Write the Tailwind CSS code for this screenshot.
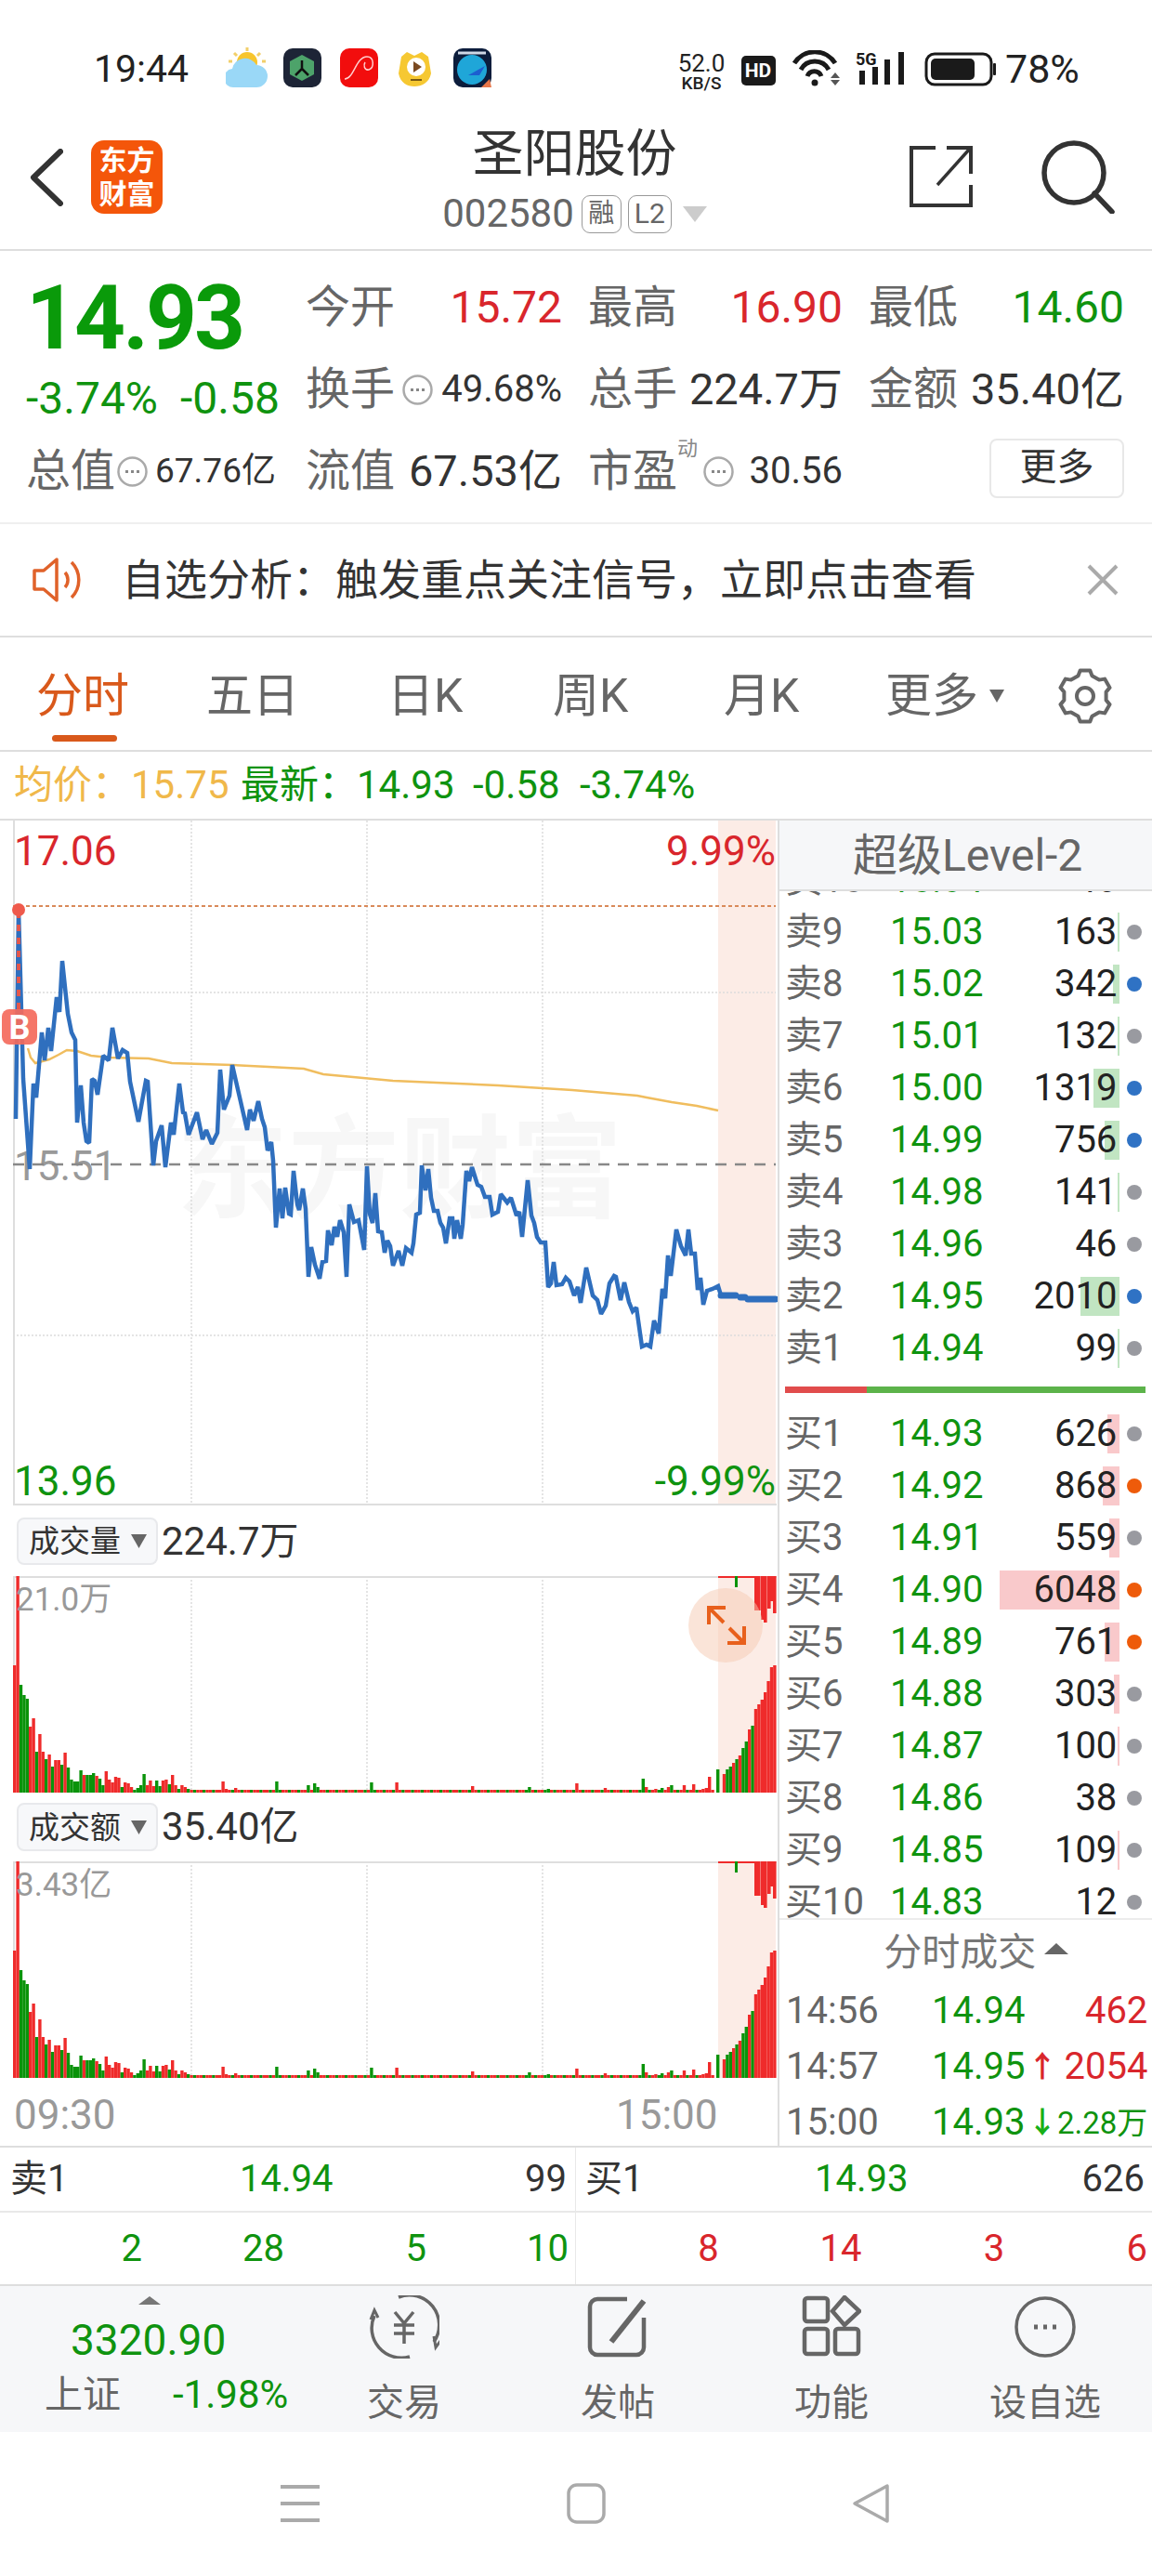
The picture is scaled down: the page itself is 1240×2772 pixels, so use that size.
<!DOCTYPE html>
<html lang="zh-CN">

<head>
    <meta charset="UTF-8">
    <meta name="viewport" content="width=device-width, initial-scale=1.0">
    <title>圣阳股份</title>
    <script src="https://cdn.jsdelivr.net/npm/@tailwindcss/browser@4"></script>
</head>

<body class="bg-white w-[1240px] h-[2772px] overflow-hidden font-['Roboto','Noto_Sans_CJK_SC',sans-serif] text-[#333]">

    <!-- status bar -->
    <div class="h-[110px] pt-[38px] flex items-center relative">
        <span class="ml-[101px] w-[142px] text-[41px] leading-none text-[#222]">19:44</span>
        <svg width="290" height="46" viewBox="243 52 290 46">
            <circle cx="266" cy="68" r="11" fill="#f7c52c" />
            <path d="M266 52v4M252 58l3 3M280 58l-3 3M246 67h4M286 67h-4" stroke="#f2cf6a" stroke-width="3" />
            <path d="M252 95a10 10 0 0 1-2-20 14 14 0 0 1 26-4 12 12 0 0 1 0 24z" fill="#9ad8f7" />
            <rect x="305" y="53" width="41" height="42" rx="10" fill="#1d2436" />
            <path d="M325 60l13 7v14l-13 7-13-7V67z" fill="#4da36a" />
            <path d="M325 66v9m0 0l-7 7m7-7l7 7" stroke="#111" stroke-width="2.5" fill="none" />
            <rect x="366" y="53" width="41" height="42" rx="10" fill="#f20d0d" />
            <path d="M371 86c10 0 12-24 24-24 8 0 8 12 2 14-5 1-6-5-4-8" stroke="#ffd0d0" stroke-width="1.5" fill="none" />
            <path d="M432 62l6-5 8 4 8-4 7 5 3 18c-2 10-10 14-18 14s-15-4-17-14z" fill="#f6c832" />
            <circle cx="448" cy="73" r="10" fill="#fff" />
            <path d="M445 67l9 6-9 6z" fill="#7a4a22" />
            <path d="M442 87h12" stroke="#7a5a12" stroke-width="2" />
            <rect x="488" y="53" width="41" height="42" rx="10" fill="#0c1d3c" />
            <circle cx="508" cy="76" r="16" fill="#1fa6d8" />
            <path d="M493 58h30" stroke="#cfd8e6" stroke-width="3" />
            <path d="M504 82l18-10-6 10z" fill="#1c5fd0" />
            <path d="M518 95l9-9 2 9z" fill="#e8774a" />
        </svg>
        <div class="absolute left-[724px] top-[56px] w-[62px] flex flex-col items-center text-[#222]">
            <span class="text-[26px] leading-[24px]">52.0</span>
            <span class="text-[19px] leading-[19px] font-medium">KB/S</span>
        </div>
        <svg class="absolute left-[798px] top-[54px]" width="368" height="42" viewBox="798 54 368 42">
            <rect x="798" y="60" width="37" height="32" rx="5" fill="#1a1a1a" />
            <text x="816" y="83" text-anchor="middle" font-size="21" font-weight="700" fill="#fff">HD</text>
            <path d="M855 68a26 26 0 0 1 44 0M862 75a17 17 0 0 1 30 0M869 82a8 8 0 0 1 15 0" stroke="#1a1a1a" stroke-width="5" fill="none" />
            <circle cx="877" cy="89" r="3.5" fill="#1a1a1a" />
            <path d="M899 78l5 6h-10zM899 92l5-6h-10z" fill="#555" />
            <text x="921" y="70" font-size="18" font-weight="700" fill="#1a1a1a">5G</text>
            <path d="M928 76v15M942 72v19M955 64v27M970 56v35" stroke="#1a1a1a" stroke-width="6" />
            <rect x="997" y="58" width="70" height="33" rx="9" fill="none" stroke="#1a1a1a" stroke-width="3" />
            <rect x="1002" y="63" width="47" height="23" rx="5" fill="#1a1a1a" />
            <rect x="1069" y="68" width="3" height="13" rx="1" fill="#1a1a1a" />
        </svg>
        <span class="absolute left-[1082px] top-[54px] text-[43px] leading-[40px] text-[#222]">78%</span>
    </div>

    <!-- stock header -->
    <div class="h-[160px] border-b-2 border-[#dedede] grid grid-cols-[1fr_auto_1fr]">
        <div class="pl-[32px] pt-[41px] flex items-start gap-[30px]">
            <svg class="mt-[9px]" width="36" height="62" viewBox="0 0 36 62">
                <path d="M33 3L4 31l29 28" fill="none" stroke="#333" stroke-width="6" stroke-linecap="round" stroke-linejoin="round" />
            </svg>
            <div class="w-[77px] h-[79px] rounded-[14px] bg-[#f4560a] text-white text-[30px] leading-[36px] font-bold flex flex-col items-center justify-center">
                <span>东方</span>
                <span>财富</span>
            </div>
        </div>
        <div class="flex flex-col items-center pt-[24px] -ml-[3px]">
            <span class="text-[55px] leading-[62px] text-[#333]">圣阳股份</span>
            <div class="mt-[13px] flex items-center text-[#666]">
                <span class="text-[42px] leading-[42px]">002580</span>
                <span class="ml-[8px] w-[43px] h-[41px] border border-[#999] rounded-[9px] text-[28px] leading-[38px] text-center">融</span>
                <span class="ml-[7px] w-[47px] h-[41px] border border-[#999] rounded-[9px] text-[30px] leading-[38px] text-center">L2</span>
                <svg class="ml-[12px]" width="26" height="17" viewBox="0 0 26 17"><path d="M0 0h26L13 17z" fill="#ccc" /></svg>
            </div>
        </div>
        <div class="flex justify-end items-start pt-[40px] pr-[40px] gap-[73px]">
            <svg class="mt-[7px]" width="68" height="66" viewBox="0 0 68 66" fill="none" stroke="#333" stroke-width="4">
                <path d="M28 2H2v62h64V42" />
                <path d="M66 30V2H40" />
                <path d="M64 4L30 42" stroke-width="3.5" />
            </svg>
            <svg width="80" height="80" viewBox="0 0 80 80" fill="none" stroke="#333" stroke-width="5.5">
                <circle cx="36" cy="36" r="32" />
                <path d="M58 58l19 20" stroke-linecap="round" />
            </svg>
        </div>
    </div>

    <!-- quote block -->
    <div class="h-[294px] border-b-2 border-[#efefef] pt-[17px] grid grid-cols-[329px_304px_302px_275px] grid-rows-[88px_88px_88px]">
        <div class="row-span-2 pl-[28px] pt-[17px]">
            <div class="text-[96px] leading-[76px] font-bold text-[#0a9a0a] tracking-[-3px]">14.93</div>
            <div class="mt-[24px] flex gap-[24px] text-[48px] leading-[50px] text-[#0f930f]">
                <span>-3.74%</span><span>-0.58</span>
            </div>
        </div>
        <div class="flex justify-between items-center w-[276px] text-[48px]"><span class="text-[#666]">今开</span><span class="text-[#d9262c]">15.72</span></div>
        <div class="flex justify-between items-center w-[274px] text-[48px]"><span class="text-[#666]">最高</span><span class="text-[#d9262c]">16.90</span></div>
        <div class="flex justify-between items-center w-[275px] text-[48px]"><span class="text-[#666]">最低</span><span class="text-[#0f930f]">14.60</span></div>

        <div class="flex items-center w-[276px]">
            <span class="text-[48px] text-[#666]">换手</span>
            <svg class="ml-[8px]" width="33" height="33" viewBox="0 0 33 33"><circle cx="16.500" cy="16.500" r="15" fill="none" stroke="#aaa" stroke-width="2.500" /><path d="M9 16.500h3M15 16.500h3M21 16.500h3" stroke="#888" stroke-width="3" /></svg>
            <span class="ml-auto text-[40px]">49.68%</span>
        </div>
        <div class="flex items-center justify-between w-[274px]"><span class="text-[48px] text-[#666]">总手</span><span class="text-[47px]">224.7万</span></div>
        <div class="flex items-center justify-between w-[275px]"><span class="text-[48px] text-[#666]">金额</span><span class="text-[47px]">35.40亿</span></div>

        <div class="flex items-center pl-[28px]">
            <span class="text-[48px] text-[#666]">总值</span>
            <svg class="ml-[2px]" width="33" height="33" viewBox="0 0 33 33"><circle cx="16.500" cy="16.500" r="15" fill="none" stroke="#aaa" stroke-width="2.500" /><path d="M9 16.500h3M15 16.500h3M21 16.500h3" stroke="#888" stroke-width="3" /></svg>
            <span class="ml-[8px] text-[37px] whitespace-nowrap">67.76亿</span>
        </div>
        <div class="flex items-center justify-between w-[276px]"><span class="text-[48px] text-[#666]">流值</span><span class="text-[47px]">67.53亿</span></div>
        <div class="flex items-center w-[274px] relative">
            <span class="text-[48px] text-[#666]">市盈</span>
            <span class="absolute left-[96px] top-[9px] text-[22px] leading-none text-[#888]">动</span>
            <svg class="ml-[28px]" width="33" height="33" viewBox="0 0 33 33"><circle cx="16.500" cy="16.500" r="15" fill="none" stroke="#aaa" stroke-width="2.500" /><path d="M9 16.500h3M15 16.500h3M21 16.500h3" stroke="#888" stroke-width="3" /></svg>
            <span class="ml-auto text-[40px]">30.56</span>
        </div>
        <div class="flex items-center">
            <span class="ml-[130px] -mt-[6px] w-[145px] h-[64px] border-2 border-[#e8e8e8] rounded-[8px] text-[40px] leading-[58px] text-center">更多</span>
        </div>
    </div>

    <!-- notice -->
    <div class="h-[122px] border-b-2 border-[#dedede] flex items-center pl-[35px] pr-[36px]">
        <svg width="60" height="50" viewBox="0 0 60 50" fill="none" stroke="#e0622a" stroke-width="3.5">
            <path d="M2 15h10L26 3v44L12 35H2z" stroke-linejoin="round" />
            <path d="M35 17a12 12 0 0 1 0 16" />
            <path d="M42 6a27 27 0 0 1 0 38" />
        </svg>
        <span class="ml-[36px] text-[46px] leading-none text-[#333] whitespace-nowrap">自选分析：触发重点关注信号，立即点击查看</span>
        <svg class="ml-auto" width="34" height="34" viewBox="0 0 34 34"><path d="M2 2l30 30M32 2L2 32" stroke="#aaa" stroke-width="4" /></svg>
    </div>

    <!-- period tabs -->
    <div class="h-[123px] border-b-2 border-[#dedede] relative text-[50px] leading-none text-[#666]">
        <span class="absolute left-[39px] top-[38px] text-[#d9591b]">分时</span>
        <span class="absolute left-[56px] top-[105px] w-[70px] h-[7px] rounded-full bg-[#d9591b]"></span>
        <span class="absolute left-[222px] top-[38px]">五日</span>
        <span class="absolute left-[417px] top-[38px]">日K</span>
        <span class="absolute left-[595px] top-[38px]">周K</span>
        <span class="absolute left-[779px] top-[38px]">月K</span>
        <span class="absolute left-[953px] top-[38px]">更多</span>
        <svg class="absolute left-[1065px] top-[56px]" width="16" height="14" viewBox="0 0 16 14"><path d="M0 0h16L8 14z" fill="#666" /></svg>
        <svg class="absolute left-[1137px] top-[32px]" width="62" height="62" viewBox="-31 -31 62 62" fill="none" stroke="#666" stroke-width="4" stroke-linejoin="round">
            <path d="M5.3 27.5L-5.3 27.5-7.5 21.7-15.1 17.4-21.1 18.4-26.5 9.1-22.6 4.4-22.6-4.4-26.5-9.1-21.1-18.4-15.1-17.4-7.5-21.7-5.3-27.5 5.3-27.5 7.5-21.7 15.1-17.4 21.1-18.4 26.5-9.1 22.6-4.4 22.6 4.4 26.5 9.1 21.1 18.4 15.1 17.4 7.5 21.7z" />
            <circle r="9" />
        </svg>
    </div>

    <!-- price line -->
    <div class="h-[72px] flex items-center pl-[15px] text-[42px] leading-none text-[#0f930f] whitespace-nowrap">
        <span class="text-[#f0b84a] w-[126px]">均价：</span>
        <span class="text-[#f0b84a] w-[118px]">15.75</span>
        <span class="w-[125px]">最新：</span>
        <span class="w-[125px]">14.93</span>
        <span class="w-[115px]">-0.58</span>
        <span>-3.74%</span>
    </div>

    <!-- charts and order book -->
    <div class="h-[1430px] border-b-2 border-t-2 border-[#dedede] flex">
        <div class="w-[837px] shrink-0">
            <svg class="block" width="837" height="738" viewBox="0 882 837 738">
                <rect x="773" y="880" width="62" height="738" fill="#fcece6" />
                <text x="430" y="1300" text-anchor="middle" font-size="120" font-weight="700" fill="#f7f7f7">东方财富</text>
                <path d="M206 882v736M395 882v736M584 882v736M14 1067h821M14 1436h821" stroke="#dcdcdc" stroke-width="1.5" stroke-dasharray="2 2" />
                <path d="M15 882v736M14 1618h822" stroke="#dedede" stroke-width="2" />
                <text x="15" y="930" font-size="44" fill="#d9262c">17.06</text>
                <text x="835" y="930" text-anchor="end" font-size="44" fill="#d9262c">9.99%</text>
                <text x="15" y="1269" font-size="44" fill="#999">15.51</text>
                <text x="15" y="1608" font-size="44" fill="#0f930f">13.96</text>
                <text x="835" y="1608" text-anchor="end" font-size="44" fill="#0f930f">-9.99%</text>
                <path d="M14 974h821" stroke="#d98a5a" stroke-width="2" stroke-dasharray="4 3" />
                <path d="M14 1252h821" stroke="#888" stroke-width="2.5" stroke-dasharray="12 9" />
                <polyline fill="none" stroke="#f0bd5e" stroke-width="2.5" points="30,1127 33,1137 38,1143 53,1139 63,1134 72,1129 83,1130 98,1135 117,1137 160,1138 185,1143 250,1145 289,1147 327,1149 348,1155 423,1162 536,1167 616,1172 686,1178 696,1180 723,1185 750,1189 773,1194" />
                <polyline fill="none" stroke="#2f6fbe" stroke-width="4.5" stroke-linejoin="miter" stroke-miterlimit="2" points="17,1203 20,978 25,1160 32,1257 36,1165 39,1180 45,1110 48,1140 52,1105 55,1130 61,1072 64,1088 67,1033 73,1090 77,1110 81,1118 83,1207 87,1167 90,1207 93,1227 96,1229 99,1160 102,1162 105,1177 111,1135 117,1140 121,1105 127,1138 132,1129 137,1132 140,1163 149,1206 157,1162 159,1163 165,1253 168,1227 174,1210 178,1255 184,1207 187,1220 193,1165 197,1196 199,1197 203,1220 212,1196 218,1225 222,1215 228,1230 234,1218 237,1150 241,1193 247,1178 250,1145 266,1215 269,1193 273,1205 278,1184 282,1203 285,1212 288,1237 292,1228 294,1248 297,1320 301,1278 304,1310 307,1277 311,1305 313,1306 316,1259 320,1295 322,1301 326,1278 329,1300 332,1373 335,1341 339,1360 344,1375 347,1357 351,1356 353,1323 357,1339 360,1319 363,1330 366,1312 370,1325 373,1373 376,1295 381,1314 386,1312 392,1344 395,1254 398,1305 401,1315 404,1283 407,1324 411,1325 414,1347 417,1334 420,1340 423,1361 429,1345 433,1361 437,1342 443,1347 445,1337 448,1306 452,1304 454,1253 458,1280 461,1257 464,1288 467,1302 471,1302 474,1315 477,1320 480,1337 484,1310 487,1310 489,1332 492,1312 496,1332 498,1317 502,1259 505,1270 508,1255 514,1274 518,1276 522,1287 527,1287 530,1306 536,1303 539,1284 546,1293 550,1288 556,1307 559,1303 562,1330 568,1269 572,1307 575,1315 578,1330 582,1336 587,1336 590,1384 593,1380 596,1357 599,1382 605,1381 609,1374 613,1378 618,1393 622,1384 625,1401 631,1363 638,1393 643,1398 647,1413 652,1404 656,1380 661,1372 663,1373 668,1398 672,1379 677,1400 681,1410 685,1406 691,1448 696,1446 700,1448 704,1420 709,1434 713,1386 716,1396 719,1350 722,1372 728,1322 733,1340 738,1350 741,1322 744,1348 748,1348 751,1387 754,1374 757,1403 761,1388 767,1386 773,1383 776,1393 792,1393 797,1395 802,1395 805,1397 835,1397" />
                <path d="M776 1393h16M797 1395h5M805 1397h30" stroke="#2f6fbe" stroke-width="7" stroke-linecap="round" />
                <path d="M20 980v105" stroke="#e2574c" stroke-width="4" stroke-dasharray="7 7" />
                <circle cx="20" cy="978" r="7" fill="#ef5a4c" />
                <rect x="2" y="1085" width="38" height="38" rx="8" fill="#f46a5c" fill-opacity=".92" />
                <text x="21" y="1117" text-anchor="middle" font-size="36" font-weight="700" fill="#fff">B</text>
            </svg>

            <div class="h-[75px] flex items-center pl-[18px]">
                <div class="w-[152px] h-[51px] bg-[#f7f8fa] border-2 border-[#e8e9ec] rounded-[8px] flex items-center pl-[11px] text-[33px] leading-none">
                    成交量
                    <svg class="ml-[11px]" width="17" height="15" viewBox="0 0 17 15"><path d="M0 0h17L8.5 15z" fill="#666" /></svg>
                </div>
                <span class="ml-[4px] text-[42px] leading-none">224.7万</span>
            </div>
            <svg class="block" width="837" height="233" viewBox="0 1695 837 233">
                <rect x="773" y="1695" width="62" height="233" fill="#fcece6" />
                <path d="M206 1695v233M395 1695v233M584 1695v233" stroke="#dcdcdc" stroke-width="1.5" stroke-dasharray="2 2" />
                <path d="M15 1695v233M14 1696h822" stroke="#dedede" stroke-width="2" />
                <g id="volBars"></g>
                <text x="17" y="1732" font-size="35" fill="#999">21.0万</text>
                <circle cx="781" cy="1748" r="40" fill="#f6c9b2" fill-opacity=".5" />
                <path d="M763 1747v-18h18M763 1729l16 16M801 1749v18h-18M801 1767l-16-16" fill="none" stroke="#e8601c" stroke-width="4" />
            </svg>

            <div class="h-[74px] flex items-center pl-[18px]">
                <div class="w-[152px] h-[52px] bg-[#f7f8fa] border-2 border-[#e8e9ec] rounded-[8px] flex items-center pl-[11px] text-[33px] leading-none">
                    成交额
                    <svg class="ml-[11px]" width="17" height="15" viewBox="0 0 17 15"><path d="M0 0h17L8.5 15z" fill="#666" /></svg>
                </div>
                <span class="ml-[4px] text-[42px] leading-none">35.40亿</span>
            </div>
            <svg class="block" width="837" height="233" viewBox="0 1695 837 233">
                <rect x="773" y="1695" width="62" height="233" fill="#fcece6" />
                <path d="M206 1695v233M395 1695v233M584 1695v233" stroke="#dcdcdc" stroke-width="1.5" stroke-dasharray="2 2" />
                <path d="M15 1695v233M14 1696h822" stroke="#dedede" stroke-width="2" />
                <g id="amtBars"></g>
                <text x="17" y="1732" font-size="35" fill="#999">3.43亿</text>
            </svg>

            <div class="h-[73px] flex items-center pl-[15px] pt-[6px] text-[44px] leading-none text-[#999]">
                <span class="w-[648px]">09:30</span>
                <span>15:00</span>
            </div>
        </div>

        <!-- order book -->
        <div class="flex-1 border-l-2 border-[#dedede] flex flex-col">
            <div class="h-[76px] shrink-0 bg-[#f6f7f9] border-b-2 border-[#dedede] text-center text-[48px] leading-[76px] text-[#666]">超级Level-2</div>
            <div class="h-[520px] shrink-0 overflow-hidden">
                <div id="sellRows" class="-mt-[40px]"></div>
            </div>
            <div class="h-[36px] shrink-0 pt-[13px] pl-[6px]">
                <div class="w-[388px] h-[7px] bg-[#5cb34a] relative">
                    <div class="w-[88px] h-full bg-[#e14c4c]"></div>
                </div>
            </div>
            <div class="h-[551px] shrink-0 overflow-hidden border-b-2 border-[#ececec]">
                <div id="buyRows"></div>
            </div>
            <div class="h-[70px] shrink-0 flex items-center justify-center text-[41px] leading-none text-[#777]">
                <span class="ml-[18px]">分时成交</span>
                <svg class="ml-[9px] -mt-[8px]" width="26" height="12" viewBox="0 0 26 12"><path d="M13 0l13 12H0z" fill="#666" /></svg>
            </div>
            <div class="flex-1 -mt-[2px] pl-[7px] pr-[9px] text-[40px] leading-none whitespace-nowrap">
                <div class="h-[60px] flex items-center"><span class="w-[157px] shrink-0 text-[#666]">14:56</span><span class="w-[103px] shrink-0 text-[#0f930f]">14.94</span><span class="ml-auto text-[#d9262c]">462</span></div>
                <div class="h-[60px] flex items-center"><span class="w-[157px] shrink-0 text-[#666]">14:57</span><span class="w-[103px] shrink-0 text-[#0f930f]">14.95</span><span class="text-[#d9262c] text-[32px] font-bold">↑</span><span class="ml-auto text-[#d9262c]">2054</span></div>
                <div class="h-[60px] flex items-center"><span class="w-[157px] shrink-0 text-[#666]">15:00</span><span class="w-[103px] shrink-0 text-[#0f930f]">14.93</span><span class="text-[#18b018] text-[32px] font-bold">↓</span><span class="ml-auto text-[#0f930f] text-[33px]">2.28万</span></div>
            </div>
        </div>
    </div>

    <!-- best bid and ask -->
    <div class="h-[70px] border-b-2 border-[#e8e8e8] flex items-stretch text-[40px] leading-none">
        <div class="w-[620px] border-r border-[#e8e8e8] flex items-center pl-[11px] pr-[9px]">
            <span class="w-[247px]">卖1</span><span class="text-[#0f930f]">14.94</span><span class="ml-auto">99</span>
        </div>
        <div class="flex-1 flex items-center pl-[10px] pr-[8px]">
            <span class="w-[247px]">买1</span><span class="text-[#0f930f]">14.93</span><span class="ml-auto">626</span>
        </div>
    </div>
    <div class="h-[79px] border-b-2 border-[#dedede] flex text-[40px] leading-none">
        <div class="w-[620px] border-r border-[#e8e8e8] pr-[7px] grid grid-cols-4 items-center text-right text-[#0f930f]">
            <span>2</span><span>28</span><span>5</span><span>10</span>
        </div>
        <div class="flex-1 grid grid-cols-4 items-center text-right text-[#d9262c] pr-[5px]">
            <span>8</span><span>14</span><span>3</span><span>6</span>
        </div>
    </div>

    <!-- bottom toolbar -->
    <div class="h-[157px] bg-[#f6f7f9] relative text-[#666]">
        <svg class="absolute left-[149px] top-[11px]" width="24" height="9" viewBox="0 0 24 9"><path d="M12 0l12 9H0z" fill="#777" /></svg>
        <span class="absolute left-[76px] top-[35px] text-[46px] leading-none text-[#0f930f]">3320.90</span>
        <span class="absolute left-[48px] top-[97px] text-[41px] leading-none">上证</span>
        <span class="absolute left-[186px] top-[96px] text-[42px] leading-none text-[#0f930f]">-1.98%</span>

        <div class="absolute left-[320px] right-0 top-[10px] grid grid-cols-4 text-[40px] leading-none">
            <div class="flex flex-col items-center">
                <svg width="76" height="68" viewBox="0 0 76 68" fill="none" stroke="#666" stroke-width="3.5">
                    <path d="M70 50A32 32 0 0 0 32 2" />
                    <path d="M6 22a32 32 0 0 0 38 44" />
                    <path d="M70 44l2 12 5-7" stroke-width="3" />
                    <path d="M2 26l4-10 4 8" stroke-width="3" />
                    <path d="M28 18l10 12 10-12M38 30v22M27 32h22M27 41h22" stroke-width="3.5" />
                </svg>
                <span class="mt-[28px]">交易</span>
            </div>
            <div class="flex flex-col items-center">
                <svg width="68" height="68" viewBox="0 0 68 68" fill="none" stroke="#666" stroke-width="4.5">
                    <path d="M44 4H12a8 8 0 0 0-8 8v44a8 8 0 0 0 8 8h42a8 8 0 0 0 8-8V24" />
                    <path d="M62 6L27 50" stroke-width="6" />
                </svg>
                <span class="mt-[28px]">发帖</span>
            </div>
            <div class="flex flex-col items-center">
                <svg width="64" height="66" viewBox="0 0 64 66" fill="none" stroke="#666" stroke-width="4.5">
                    <rect x="3" y="3" width="25" height="25" rx="3" />
                    <path d="M46 2l16 15-16 15-13-15z" />
                    <rect x="3" y="36" width="25" height="27" rx="3" />
                    <rect x="36" y="36" width="25" height="27" rx="3" />
                </svg>
                <span class="mt-[30px]">功能</span>
            </div>
            <div class="flex flex-col items-center">
                <svg width="68" height="68" viewBox="0 0 68 68" fill="none" stroke="#666" stroke-width="3.5">
                    <circle cx="34" cy="34" r="31" />
                    <path d="M22 34h4M32 34h4M42 34h4" stroke-width="5" />
                </svg>
                <span class="mt-[28px]">设自选</span>
            </div>
        </div>
    </div>

    <!-- android nav bar -->
    <div class="h-[154px] bg-white flex items-start pt-[55px]">
        <svg class="ml-[302px]" width="42" height="44" viewBox="0 0 42 44"><path d="M0 4h42M0 22h42M0 40h42" stroke="#aaa" stroke-width="4" /></svg>
        <svg class="ml-[266px]" width="42" height="44" viewBox="0 0 42 44"><rect x="2" y="2" width="38" height="40" rx="9" fill="none" stroke="#aaa" stroke-width="3.5" /></svg>
        <svg class="ml-[265px]" width="42" height="44" viewBox="0 0 42 44"><path d="M38 3v38L3 22z" fill="none" stroke="#aaa" stroke-width="3.5" stroke-linejoin="round" /></svg>
    </div>

    <script>
        // level-2 rows: label, price, volume, bar width, dot colour
        const sell = [
            ['卖10', '15.04', '46', 0, '#999aa0'], ['卖9', '15.03', '163', 2, '#999aa0'], ['卖8', '15.02', '342', 7, '#2f72c4'],
            ['卖7', '15.01', '132', 2, '#999aa0'], ['卖6', '15.00', '1319', 28, '#2f72c4'], ['卖5', '14.99', '756', 16, '#2f72c4'],
            ['卖4', '14.98', '141', 2, '#999aa0'], ['卖3', '14.96', '46', 0, '#999aa0'], ['卖2', '14.95', '2010', 42, '#2f72c4'],
            ['卖1', '14.94', '99', 2, '#999aa0']
        ];
        const buy = [
            ['买1', '14.93', '626', 13, '#999aa0'], ['买2', '14.92', '868', 18, '#ee5b0a'], ['买3', '14.91', '559', 11, '#999aa0'],
            ['买4', '14.90', '6048', 129, '#ee5b0a'], ['买5', '14.89', '761', 16, '#ee5b0a'], ['买6', '14.88', '303', 6, '#999aa0'],
            ['买7', '14.87', '100', 2, '#999aa0'], ['买8', '14.86', '38', 0, '#999aa0'], ['买9', '14.85', '109', 2, '#999aa0'],
            ['买10', '14.83', '12', 0, '#999aa0']
        ];

        function bookRow(r, barClass) {
            return `<div class="h-[56px] flex items-center relative text-[40px] leading-none">
                <span class="ml-[6px] w-[113px] text-[#666] whitespace-nowrap">${r[0]}</span>
                <span class="w-[106px] text-[#0f930f]">${r[1]}</span>
                <span class="absolute right-[39px] top-[7px] h-[42px] ${barClass}" style="width:${r[3]}px"></span>
                <span class="absolute right-[42px] text-[#222]">${r[2]}</span>
                <span class="absolute right-[15px] w-[16px] h-[16px] rounded-full" style="background:${r[4]}"></span>
            </div>`;
        }
        document.getElementById('sellRows').innerHTML = sell.map(r => bookRow(r, 'bg-[#c1e5c2]')).join('');
        document.getElementById('buyRows').innerHTML = buy.map(r => bookRow(r, 'bg-[#f9c9cb]')).join('');

        // volume bars, px height, negative is a down minute (green)
        const head = [137, 233, -116, -105, -101, 71, 80, -44, 63, 44, -36, 41, -28, 35, 35, -30, 43, -27, -14, -12, -12, -24, 19, -19, -19, -21, 18, -15, -8, 23, 14, 11, 17, 16, -6, 11, 10, 6, -3, -5, -8, -20, 8, 13, 7, -13, -7, 13, 14, -9, 19, 8, -4, 8, 6, -4];
        const spikes = { 66: 12, 67: 4, 70: 5, 83: -12, 93: -8, 95: -10, 96: -6, 113: -11, 121: 11, 145: 7, 163: -6, 169: -4, 178: 10, 187: 5, 199: -15, 200: 6, 203: 4, 205: -5, 207: 6, 208: -8, 212: 8, 215: 9, 217: 3, 218: 4, 219: 5, 220: 17 };
        const tail = [-25, 0, 20, -25, -28, 32, -36, 40, -48, -55, 68, -72, 90, 95, 100, 108, 120, 135, 137];
        const hanging = { 791: -12, 812: 37, 815: 37, 819: 47, 822: 50, 826: 35, 829: 27, 832: 40 };

        function drawBars(id, top) {
            let out = '';
            const bar = (x, h) => {
                if (h) out += `<rect x="${x}" y="${top + 233 - Math.abs(h)}" width="3.4" height="${Math.abs(h)}" fill="${h > 0 ? '#ef2b2b' : '#0a930a'}"/>`;
            };
            for (let i = 0; i < 222; i++) {
                const h = i < head.length ? head[i] : (spikes[i] || (i % 3 ? 3 : -3));
                bar(14 + i * 3.4, h);
            }
            tail.forEach((h, i) => bar(771 + i * 3.4, h));
            out += `<rect x="773" y="${top}" width="40" height="2" fill="#ef2b2b"/>`;
            Object.keys(hanging).forEach(x => {
                const h = hanging[x];
                out += `<rect x="${x}" y="${top}" width="${h > 0 ? 3.6 : 3}" height="${Math.abs(h)}" fill="${h > 0 ? '#ef2b2b' : '#0a930a'}"/>`;
            });
            document.getElementById(id).innerHTML = out;
        }
        drawBars('volBars', 1695);
        drawBars('amtBars', 1695);
    </script>
</body>

</html>
